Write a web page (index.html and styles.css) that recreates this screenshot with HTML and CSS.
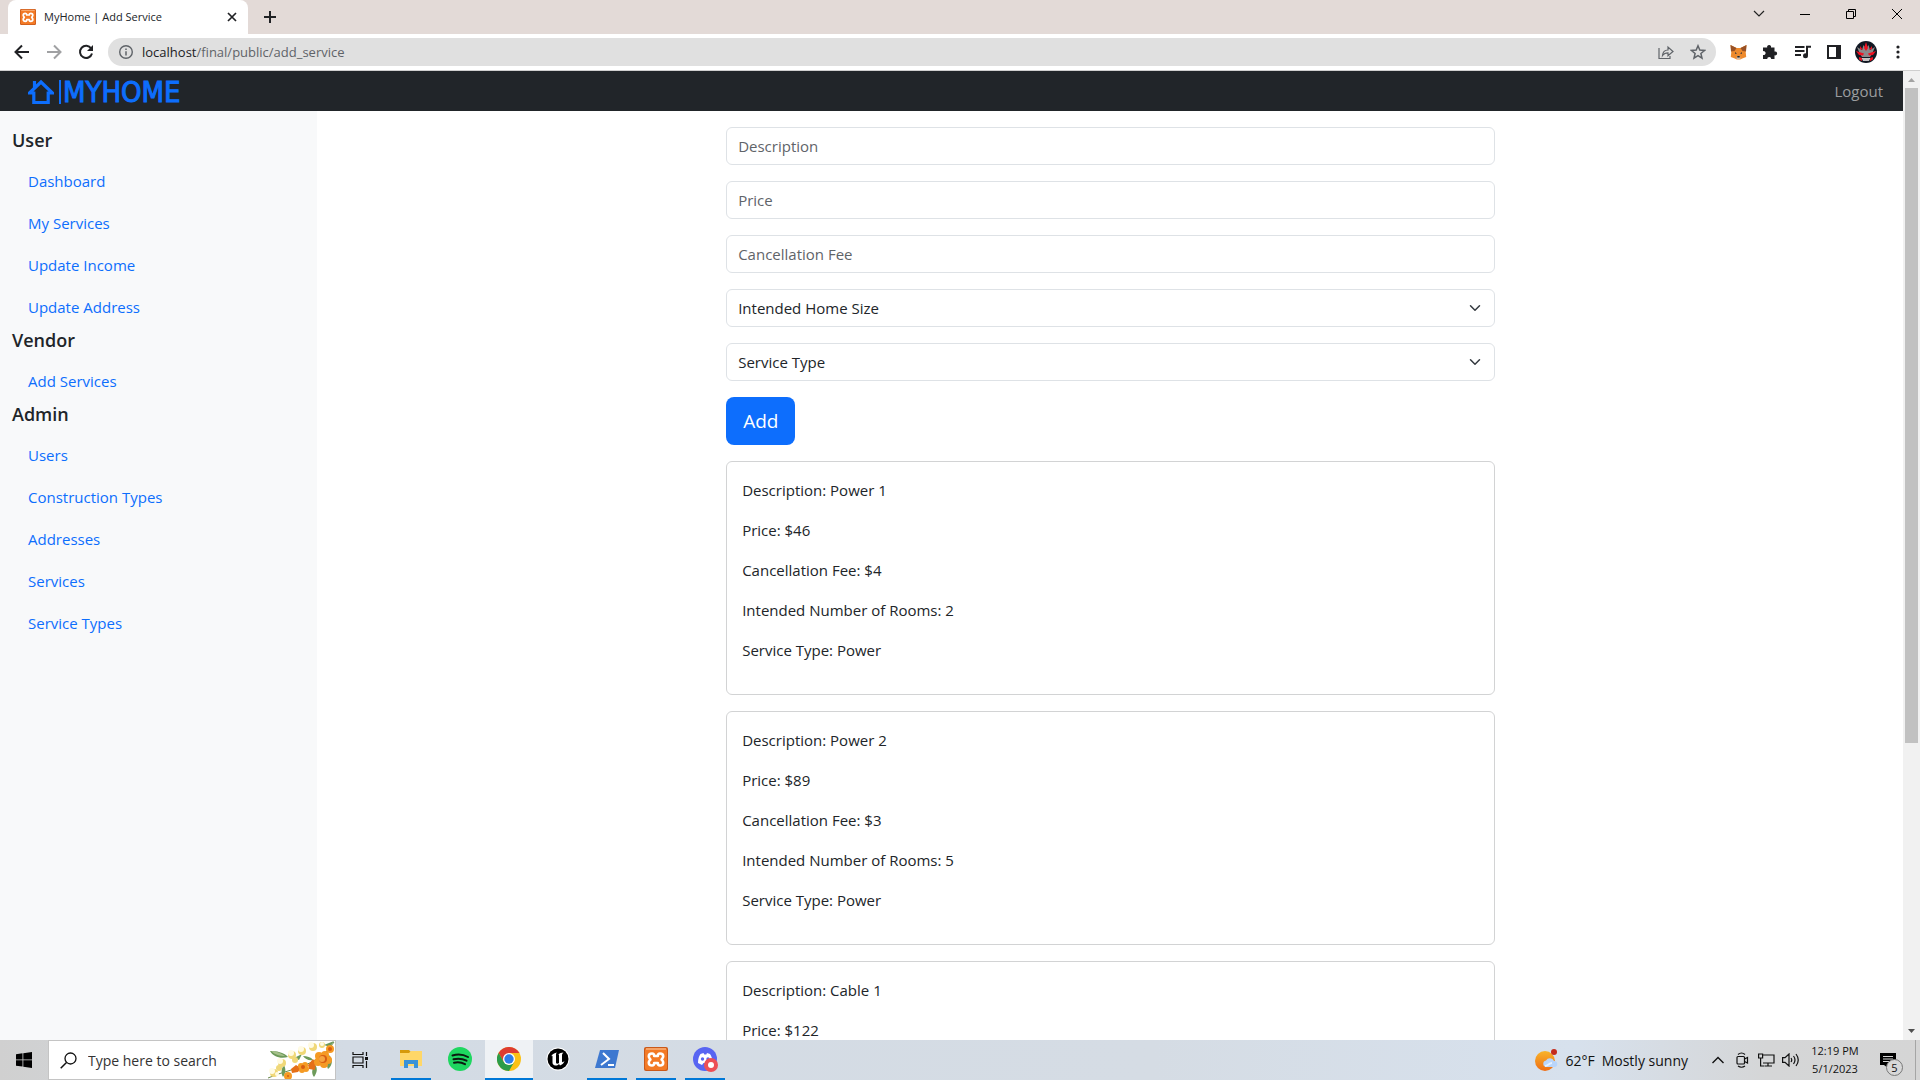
FILE: index.html
```html
<!DOCTYPE html>
<html lang="en">
<head>
  <meta charset="UTF-8">
  <meta name="viewport" content="width=device-width, initial-scale=1.0">
  <title>MyHome | Add Service</title>
  <link rel="stylesheet" href="styles.css">
</head>
<body>

  <!-- shared icon -->
  <svg class="defs" width="0" height="0" aria-hidden="true">
    <symbol id="xampp" viewBox="0 0 24 24">
      <rect width="24" height="24" rx="2" fill="#c9591a"/>
      <rect x="1" y="1" width="22" height="22" rx="2" fill="#f37a26"/>
      <path d="M2 2h20" stroke="#f9b27c" stroke-width="1.500"/>
      <path d="M8 6.500c1.500 0 2.200 1 2.200 2.500h3.600c0-1.500.7-2.500 2.200-2.500 2 0 3.200 1.200 3.200 2.800s-1 2.200-1.600 3.200c.6 1 1.600 1.600 1.600 3.200s-1.200 2.800-3.200 2.800c-1.500 0-2.200-1-2.200-2.500h-3.600c0 1.500-.7 2.500-2.200 2.500-2 0-3.200-1.200-3.200-2.800s1-2.200 1.600-3.200c-.6-1-1.600-1.600-1.600-3.200S6 6.500 8 6.500z" fill="#f37a26" stroke="#fff" stroke-width="2.600" stroke-linejoin="round"/>
    </symbol>
  </svg>

  <header class="browser">
    <div class="tab-strip">
      <div class="tab">
        <svg width="16" height="16"><use href="#xampp"/></svg>
        <span class="tab-title">MyHome | Add Service</span>
        <button class="tab-close" aria-label="Close tab">
          <svg width="10" height="10" viewBox="0 0 10 10"><path d="M1 1l8 8M9 1L1 9" stroke="#202124" stroke-width="1.700"/></svg>
        </button>
      </div>
      <button class="new-tab" aria-label="New tab">
        <svg width="12" height="12" viewBox="0 0 12 12"><path d="M6 0v12M0 6h12" stroke="#202124" stroke-width="2"/></svg>
      </button>
      <div class="window-controls">
        <button aria-label="Search tabs"><svg width="12" height="8" viewBox="0 0 12 8"><path d="M1 1l5 5 5-5" fill="none" stroke="#222" stroke-width="1.200"/></svg></button>
        <button aria-label="Minimize"><svg width="10" height="10" viewBox="0 0 10 10"><path d="M0 5.500h10" stroke="#000"/></svg></button>
        <button aria-label="Restore"><svg width="10" height="10" viewBox="0 0 10 10"><path d="M.5 2.500h7v7h-7zM2.500 2.500v-2h7v7h-2" fill="none" stroke="#000"/></svg></button>
        <button aria-label="Close"><svg width="10" height="10" viewBox="0 0 10 10"><path d="M0 0l10 10M10 0L0 10" stroke="#000"/></svg></button>
      </div>
    </div>

    <div class="toolbar">
      <button aria-label="Back"><svg width="16" height="16" viewBox="0 0 16 16"><path d="M15 8H2M8 1.500L1.500 8 8 14.500" fill="none" stroke="#202124" stroke-width="2"/></svg></button>
      <button aria-label="Forward"><svg width="16" height="16" viewBox="0 0 16 16"><path d="M1 8h13M8 1.500L14.500 8 8 14.500" fill="none" stroke="#a0a1a3" stroke-width="2"/></svg></button>
      <button aria-label="Reload"><svg width="16" height="16" viewBox="0 0 16 16"><path d="M13.200 4.500A6.100 6.100 0 1 0 14 9.500" fill="none" stroke="#202124" stroke-width="2"/><path d="M15 1v6H9z" fill="#202124"/></svg></button>
      <div class="omnibox">
        <svg width="14" height="14" viewBox="0 0 14 14"><circle cx="7" cy="7" r="6.300" fill="none" stroke="#5f6368" stroke-width="1.400"/><path d="M7 6.200V10.500M7 3.400v1.500" stroke="#5f6368" stroke-width="1.500"/></svg>
        <span class="url">localhost<span class="path">/final/public/add_service</span></span>
        <button aria-label="Share"><svg width="16" height="16" viewBox="0 0 16 16"><path d="M1 4v10.500h11V12M4.500 11.500c.3-3.300 2-5.500 5.500-5.500V3l5 4.500-5 4.200V8.800c-2.500 0-4.200.9-5.500 2.700z" fill="none" stroke="#5f6368" stroke-width="1.200"/></svg></button>
        <button aria-label="Bookmark"><svg width="16" height="16" viewBox="0 0 16 16"><path d="M8 1.800l1.800 4.300 4.700.4-3.600 3 1.100 4.600L8 11.700l-4 2.400 1.100-4.600-3.600-3 4.700-.4z" fill="none" stroke="#5f6368" stroke-width="1.500"/></svg></button>
      </div>
      <button aria-label="MetaMask">
        <svg width="17" height="16" viewBox="0 0 17 16">
          <path d="M.5 1l6 3h4l6-3-.8 7 .5 5-4 1.500-2 1h-3.400l-2-1L.8 13l.5-5z" fill="#ee8a2c"/>
          <path d="M.5 1l6 3-2 3-3.500.500zM16.500 1l-6 3 2 3 3.500.500z" fill="#975126"/>
          <path d="M5 8l2 1.500L5 10zM12 8l-2 1.500 2 .5z" fill="#4a4038"/>
          <path d="M7 12h3l.5 3h-4z" fill="#d0b9a8"/><path d="M7.300 12h2.400v1.500H7.300z" fill="#202020"/>
        </svg>
      </button>
      <button aria-label="Extensions"><svg width="16" height="16" viewBox="0 0 16 16"><path d="M1 3.500h4.200a2 2 0 1 1 3.800 0h3.500v4a2 2 0 1 1 0 3.800V15H9.200a2 2 0 1 0-4 0H1v-4a2 2 0 1 0 0-3.800z" fill="#202124"/></svg></button>
      <button aria-label="Media"><svg width="17" height="14" viewBox="0 0 17 14"><path d="M1 2h9.500M1 6h9.500M1 10h6" stroke="#202124" stroke-width="1.800"/><path d="M13 10.500V1.800h4" fill="none" stroke="#202124" stroke-width="2"/><circle cx="11.500" cy="10.800" r="2.500" fill="#202124"/></svg></button>
      <button aria-label="Side panel"><svg width="14" height="14" viewBox="0 0 14 14"><path d="M1 1h12v12H1z" fill="none" stroke="#202124" stroke-width="2"/><path d="M9 0h5v14H9z" fill="#202124"/></svg></button>
      <button aria-label="Profile">
        <svg width="22" height="22" viewBox="0 0 22 22">
          <circle cx="11" cy="11" r="11" fill="#101722"/>
          <path d="M2 6l5 3 1.500-5L11 8l2.500-4L15 9l5-3-3 7-2 3H7l-2-3z" fill="#8b8889"/>
          <path d="M11 1l2 6-2 3-2-3zM1 10l8 2.500-1 2-4-.5zM21 10l-8 2.500 1 2 4-.5zM4 16l3 1v3l-3-1.500zM18 16l-3 1v3l3-1.500zM5 5l3 4-3-1zM17 5l-3 4 3-1z" fill="#ee1020"/>
          <path d="M7 17h8l-1 3H8z" fill="#f3eeee"/><path d="M9 17v3M11 17v3M13 17v3" stroke="#333" stroke-width=".5"/>
        </svg>
      </button>
      <button aria-label="Menu"><svg width="4" height="14" viewBox="0 0 4 14" fill="#202124"><circle cx="2" cy="2" r="1.600"/><circle cx="2" cy="7" r="1.600"/><circle cx="2" cy="12" r="1.600"/></svg></button>
    </div>
  </header>

  <div class="viewport">
    <div class="page">
      <nav class="navbar">
        <a class="brand" href="#">
          <svg width="26" height="26" viewBox="0 0 26 26"><path d="M1.500 14L13 3l11.500 11h-4.300v9.500H5.800V14zM6.500 9V2" fill="none" stroke="#0d6efd" stroke-width="3.200"/></svg>
          <span class="brand-bar"></span>
          <span>MYHOME</span>
        </a>
        <a class="logout" href="#">Logout</a>
      </nav>

      <div class="row">
        <aside class="sidebar">
          <h5>User</h5>
          <a href="#">Dashboard</a>
          <a href="#">My Services</a>
          <a href="#">Update Income</a>
          <a href="#">Update Address</a>
          <h5>Vendor</h5>
          <a href="#">Add Services</a>
          <h5>Admin</h5>
          <a href="#">Users</a>
          <a href="#">Construction Types</a>
          <a href="#">Addresses</a>
          <a href="#">Services</a>
          <a href="#">Service Types</a>
        </aside>

        <main class="content">
          <form class="service-form">
            <input class="form-control" type="text" aria-label="Description" placeholder="Description">
            <input class="form-control" type="text" aria-label="Price" placeholder="Price">
            <input class="form-control" type="text" aria-label="Cancellation Fee" placeholder="Cancellation Fee">
            <div class="select-wrap">
              <select class="form-control" aria-label="Intended Home Size"><option>Intended Home Size</option></select>
              <svg class="caret" width="12" height="12" viewBox="0 0 16 16"><path d="M2 5l6 6 6-6" fill="none" stroke="#343a40" stroke-width="2" stroke-linecap="round" stroke-linejoin="round"/></svg>
            </div>
            <div class="select-wrap">
              <select class="form-control" aria-label="Service Type"><option>Service Type</option></select>
              <svg class="caret" width="12" height="12" viewBox="0 0 16 16"><path d="M2 5l6 6 6-6" fill="none" stroke="#343a40" stroke-width="2" stroke-linecap="round" stroke-linejoin="round"/></svg>
            </div>
            <button class="btn-primary" type="submit">Add</button>
          </form>

          <div class="card">
            <p>Description: Power 1</p>
            <p>Price: $46</p>
            <p>Cancellation Fee: $4</p>
            <p>Intended Number of Rooms: 2</p>
            <p>Service Type: Power</p>
          </div>
          <div class="card">
            <p>Description: Power 2</p>
            <p>Price: $89</p>
            <p>Cancellation Fee: $3</p>
            <p>Intended Number of Rooms: 5</p>
            <p>Service Type: Power</p>
          </div>
          <div class="card">
            <p>Description: Cable 1</p>
            <p>Price: $122</p>
          </div>
        </main>
      </div>
    </div>

    <div class="scrollbar">
      <svg width="17" height="17" viewBox="0 0 17 17"><path d="M5 11l3.500-4 3.500 4z" fill="#a3a3a3"/></svg>
      <div class="track"><div class="thumb"></div></div>
      <svg width="17" height="17" viewBox="0 0 17 17"><path d="M5 6l3.500 4L12 6z" fill="#505050"/></svg>
    </div>
  </div>

  <footer class="taskbar">
    <button class="start" aria-label="Start">
      <svg width="16" height="16" viewBox="0 0 16 16"><path d="M0 2.200L6.500 1.300v6.200H0zM7.300 1.200L16 0v7.500H7.300zM0 8.300h6.500v6.300L0 13.700zM7.300 8.300H16V16l-8.700-1.200z"/></svg>
    </button>
    <div class="search">
      <svg width="17" height="17" viewBox="0 0 17 17"><circle cx="10.500" cy="6.500" r="5.500" fill="none" stroke="#111" stroke-width="1.300"/><path d="M6.500 10.500L.7 16.300" stroke="#111" stroke-width="1.500"/></svg>
      <input type="text" aria-label="Search" placeholder="Type here to search">
      <svg class="flowers" width="68" height="38" viewBox="0 0 68 38">
        <path d="M1 37C14 31 32 28 45 21S62 8 67 1" fill="none" stroke="#6a8a4b" stroke-width="1"/>
        <path d="M3 10c6 0 14 1 18 6-7 2-15 0-18-6zM36 15c4 0 8 1 10 4-4 1-8-1-10-4zM62 14c4 4 4 10-1 14-2-5-1-10 1-14zM17 24c2 4 2 8-1 12-2-4-2-8 1-12zM27 17l8-4-3 6zM48 24c3 3 2 8-1 12-3-4-2-8 1-12zM57 4l10-4-4 6z" fill="#6d9a5a"/>
        <path d="M4 10c5 0 10 2 14 5-5 0-10-1-14-5z" fill="#a5c08a"/>
        <g fill="#f0d878"><circle cx="25" cy="14" r="4"/><circle cx="35" cy="10" r="4"/><circle cx="46" cy="6" r="4"/><circle cx="55" cy="4" r="3"/><circle cx="15" cy="22" r="4"/><circle cx="7" cy="32" r="4"/><circle cx="28" cy="19" r="3"/><circle cx="12" cy="27" r="3"/></g>
        <g fill="#fffbe4"><circle cx="24" cy="12" r="3"/><circle cx="34" cy="8" r="3"/><circle cx="44" cy="4" r="3"/><circle cx="13" cy="20" r="3"/><circle cx="5" cy="30" r="3"/><circle cx="10" cy="33" r="2"/><circle cx="55" cy="3" r="2"/></g>
        <path d="M41 24l5-6 3 4-1 7-6-1z" fill="#e56f18"/>
        <path d="M24 28l5-4 5 3-3 4-6 1z" fill="#e56f18"/>
        <g fill="#f59a24"><circle cx="52" cy="15" r="4"/><circle cx="58" cy="14" r="4"/><circle cx="61" cy="19" r="4"/><circle cx="51" cy="21" r="4"/><circle cx="57" cy="23" r="4"/><circle cx="34" cy="25" r="3"/><circle cx="38" cy="24" r="3"/><circle cx="39" cy="28" r="3"/><circle cx="35" cy="29" r="3"/><circle cx="63" cy="8" r="4"/><circle cx="21" cy="35" r="4"/></g>
        <g fill="#d75d12"><circle cx="56" cy="18" r="4"/><circle cx="36" cy="26" r="2"/><circle cx="63" cy="8" r="2"/><circle cx="21" cy="35" r="1"/></g>
        <circle cx="55" cy="18" r="3" fill="#f6a440"/>
      </svg>
    </div>
    <button class="task-view" aria-label="Task view">
      <svg width="17" height="16" viewBox="0 0 17 16" fill="none" stroke="#111" stroke-width="1.200"><path d="M1 0v2.500h10V0M1 5h10v6H1zM1 16v-2.500h10V16M14.500 0v4M14.500 9v7"/><path d="M13 5h3v3h-3z" fill="#111" stroke="none"/></svg>
    </button>
    <div class="apps">
      <button class="app open" aria-label="File Explorer">
        <svg width="22" height="18" viewBox="0 0 22 18"><path d="M0 0h9l2 2v5H0z" fill="#d69a0b"/><path d="M0 3h9l2-2h11v15H0z" fill="#ffd768"/><path d="M4 18v-8h14v8h-4v-4H8v4z" fill="#3a92d8"/></svg>
      </button>
      <button class="app" aria-label="Spotify">
        <svg width="24" height="24" viewBox="0 0 24 24"><circle cx="12" cy="12" r="12" fill="#1ed760"/><path d="M4.500 8.500c5-1.500 11-1 15.500 1.500M5.500 12.300c4.500-1.200 9-.7 13 1.400M6 15.800c4-.9 7.500-.5 11 1.400" fill="none" stroke="#0b1a10" stroke-width="2" stroke-linecap="round"/></svg>
      </button>
      <button class="app open active" aria-label="Chrome">
        <svg width="24" height="24" viewBox="0 0 24 24"><circle cx="12" cy="12" r="12" fill="#fbc116"/><path d="M12 6h10.400A12 12 0 0 0 1.600 6l5.200 9z" fill="#de3c31"/><path d="M1.600 6A12 12 0 0 0 12 24l5.200-9-5.200 3-5.200-3z" fill="#2b9c4a"/><circle cx="12" cy="12" r="6" fill="#fff"/><circle cx="12" cy="12" r="4.700" fill="#2f7de9"/></svg>
      </button>
      <button class="app" aria-label="Unreal Engine">
        <svg width="24" height="24" viewBox="0 0 24 24"><circle cx="12" cy="12" r="11.500" fill="#fff"/><circle cx="12" cy="12" r="10.500"/><path d="M5 9.500C6.500 7 8.500 5.800 11 5.500c-1 .8-1 1.500-1 2.500v7.500c0 1.500 2 1.500 3 .5V8.500c0-1-.5-1-1-.800 1.500-1.500 3.500-2 5.500-2.200-1.200 1-1.500 1.800-1.500 3v6c.3 1 1.200.8 2.500-.5-1 2.500-2.500 3.800-4.500 4.500l-1-1.500c-1 1-2 1.500-3.500 1.500-2-.2-3-1.200-3-3V9.500c0-1-.5-1-1.500 0z" fill="#fff"/></svg>
      </button>
      <button class="app open" aria-label="PowerShell">
        <svg width="24" height="18" viewBox="0 0 24 18"><path d="M5 0h19l-4 18H0z" fill="#3d78d0"/><path d="M8 3l6 6-8 6M13 15h6" fill="none" stroke="#fff" stroke-width="2"/></svg>
      </button>
      <button class="app open" aria-label="XAMPP">
        <svg width="24" height="24"><use href="#xampp"/></svg>
      </button>
      <button class="app open" aria-label="Discord">
        <svg width="25" height="25" viewBox="0 0 25 25"><circle cx="12" cy="12" r="12" fill="#5865f2"/><path d="M5 16c0-4 1-7 2.500-9l3-1 .8 1.500h2L14 6l3 1c1.500 2 2.500 5 2.500 9l-3.500 2-1.500-2h-4L9 18z" fill="#fff"/><circle cx="9.500" cy="12" r="1.700" fill="#5865f2"/><circle cx="15" cy="12" r="1.700" fill="#5865f2"/><circle cx="18" cy="18" r="7" fill="#ed4f55"/><circle cx="18" cy="18" r="3" fill="#fff"/></svg>
      </button>
    </div>

    <div class="tray">
      <button class="weather">
        <svg width="23" height="22" viewBox="0 0 23 22"><defs><linearGradient id="sun" x2="0" y2="1"><stop stop-color="#f8b42b"/><stop offset="1" stop-color="#ef6c13"/></linearGradient></defs><circle cx="10" cy="12" r="10" fill="url(#sun)"/><circle cx="19" cy="3" r="3" fill="#c42b1c"/><path d="M11 18a3.300 3.300 0 0 1 0-6.500 4.500 4.500 0 0 1 8 .5 3 3 0 0 1 .5 6z" fill="#b9d5fa"/><path d="M10 17c3 0 4-3 7-3" fill="none" stroke="#e6f1ff" stroke-width="2"/></svg>
        <span>62°F</span>
        <span>Mostly sunny</span>
      </button>
      <button class="tray-icon" aria-label="Show hidden icons"><svg width="12" height="8" viewBox="0 0 12 8"><path d="M.5 7L6 1.500 11.500 7" fill="none" stroke="#111" stroke-width="1.400"/></svg></button>
      <button class="tray-icon" aria-label="Meet now"><svg width="13" height="16" viewBox="0 0 13 16" fill="none" stroke="#111" stroke-width="1.200"><rect x="1" y="4.500" width="7.500" height="7.500" rx="1"/><path d="M8.500 7l3-1.500v5.500l-3-1.500M2 2.500Q5.500-.5 9 2.500M2 14q3.500 2.500 7 0"/></svg></button>
      <button class="tray-icon" aria-label="Network"><svg width="17" height="14" viewBox="0 0 17 14" fill="none" stroke="#111" stroke-width="1.200"><path d="M5 2h11v8H5M10 10v3M7 13h7M.6 1h4v4h-4zM2.600 5v8h4"/></svg></button>
      <button class="tray-icon" aria-label="Volume"><svg width="17" height="14" viewBox="0 0 17 14" fill="none" stroke="#111" stroke-width="1.200"><path d="M.6 4.700H3L7 1v12L3 9.300H.6zM9 5q1.500 2 0 4M11.500 3q3 4 0 8M14 1q4.500 6 0 12"/></svg></button>
      <div class="clock"><span>12:19 PM</span><span>5/1/2023</span></div>
      <button class="notifications" aria-label="Notifications">
        <svg width="16" height="15" viewBox="0 0 16 15"><path d="M0 0h16v12H8v3l-4-3H0z"/><path d="M3 3.500h10M3 6h10M3 8.500h7" stroke="#d5d5d5"/></svg>
        <span class="badge">5</span>
      </button>
    </div>
  </footer>

</body>
</html>
```
FILE: styles.css
```css
* {
  box-sizing: border-box;
}

body {
  margin: 0;
  height: 100vh;
  display: flex;
  flex-direction: column;
  overflow: hidden;
  font-family: "Segoe UI", "Open Sans", "Noto Sans", sans-serif;
  font-size: 15px;
  line-height: 24px;
  color: #212529;
  background-color: #fff;
}

button {
  display: flex;
  align-items: center;
  justify-content: center;
  padding: 0;
  border: none;
  background: none;
  font-family: inherit;
  color: inherit;
}

a {
  text-decoration: none;
}

svg {
  flex-shrink: 0;
}

.defs {
  position: absolute;
}

/* Browser window */
.tab-strip {
  display: flex;
  height: 34px;
  padding-left: 8px;
  background-color: #e3dad7;
}

.tab {
  display: flex;
  align-items: center;
  width: 240px;
  padding: 0 11px 0 12px;
  background-color: #fff;
  border-radius: 8px 8px 0 0;
}

.tab-title {
  flex: 1;
  margin-left: 8px;
  font-size: 11px;
}

.tab-close {
  width: 10px;
}

.new-tab {
  width: 28px;
  margin-left: 8px;
}

.window-controls {
  display: flex;
  margin-left: auto;
}

.window-controls button {
  width: 46px;
  height: 28px;
}

.toolbar {
  display: flex;
  align-items: center;
  height: 37px;
  padding: 0 6px;
  border-bottom: 1px solid #cfcfcf;
}

.toolbar button {
  width: 32px;
  height: 28px;
}

.omnibox {
  flex: 1;
  display: flex;
  align-items: center;
  height: 28px;
  margin: 0 6px;
  padding: 0 2px 0 11px;
  border-radius: 14px;
  background-color: #e0e0e0;
}

.url {
  flex: 1;
  margin-left: 9px;
  font-size: 13px;
  color: #202124;
}

.path {
  color: #5f6368;
}

/* Page */
.viewport {
  flex: 1;
  display: flex;
  min-height: 0;
}

.page {
  flex: 1;
  display: flex;
  flex-direction: column;
  overflow: hidden;
}

.navbar {
  display: flex;
  align-items: center;
  justify-content: space-between;
  flex-shrink: 0;
  height: 40px;
  padding: 0 20px 0 28px;
  background-color: #212529;
}

.brand {
  display: flex;
  align-items: center;
  color: #0d6efd;
  font-family: "DejaVu Sans Condensed", "DejaVu Sans", sans-serif;
  font-size: 29px;
  font-stretch: condensed;
  line-height: 28px;
  padding-top: 2px;
  -webkit-text-stroke: 1px #0d6efd;
}

.brand-bar {
  width: 2px;
  height: 24px;
  margin: 0 2px 0 5px;
  background-color: #0d6efd;
}

.logout {
  color: #9b9d9f;
}

.row {
  flex: 1;
  display: flex;
  min-height: 0;
}

.sidebar {
  width: calc(100% / 6);
  padding: 17px 12px;
  background-color: #f8f9fa;
}

.sidebar h5 {
  margin: 0 0 8px;
  font-size: 18px;
  font-weight: 600;
  line-height: 24px;
}

.sidebar a {
  display: block;
  padding: 9px 16px;
  color: #0d6efd;
}

.content {
  flex: 1;
  padding: 16px 408px 16px 409px;
}

.service-form {
  display: flex;
  flex-direction: column;
  gap: 16px;
  margin-bottom: 16px;
}

.form-control {
  display: block;
  width: 100%;
  height: 38px;
  padding: 6px 11px;
  border: 1px solid #dee2e6;
  border-radius: 6px;
  background-color: #fff;
  color: #212529;
  font-family: inherit;
  font-size: 15px;
  line-height: 24px;
  appearance: none;
}

.form-control::placeholder {
  color: #5f6469;
  opacity: 1;
}

.select-wrap {
  position: relative;
}

.caret {
  position: absolute;
  top: 13px;
  right: 14px;
  pointer-events: none;
}

.btn-primary {
  align-self: flex-start;
  height: 48px;
  padding: 0 17px;
  border-radius: 8px;
  background-color: #0d6efd;
  color: #fff;
  font-size: 19px;
}

.card {
  margin-bottom: 16px;
  padding: 16px 15px;
  border: 1px solid #d2d3d4;
  border-radius: 6px;
}

.card p {
  margin: 0 0 16px;
}

.scrollbar {
  display: flex;
  flex-direction: column;
  width: 17px;
  background-color: #f1f1f1;
}

.track {
  flex: 1;
  padding: 0 2px;
}

.thumb {
  height: 70%;
  background-color: #c1c1c1;
}

/* Taskbar */
.taskbar {
  display: flex;
  flex-shrink: 0;
  height: 40px;
  background: linear-gradient(to right, #d0d0d0, #d3dbe4 18%, #d5dce4 60%, #d7e1ed 82%, #d5d6d7 92%, #d5d5d5);
  color: #111;
}

.start {
  width: 48px;
}

.search {
  display: flex;
  align-items: center;
  width: 288px;
  padding-left: 11px;
  border: 1px solid #c4c4c4;
  background-color: #fff;
}

.search input {
  flex: 1;
  min-width: 0;
  margin-left: 11px;
  padding: 0;
  border: none;
  font-family: inherit;
  font-size: 14px;
}

.search input::placeholder {
  color: #333;
  opacity: 1;
}

.task-view {
  width: 48px;
}

.apps {
  display: flex;
  gap: 1px;
  margin-left: 3px;
}

.app {
  width: 48px;
  border-bottom: 2px solid transparent;
}

.app.open {
  background: linear-gradient(#0078d7, #0078d7) center bottom / 40px 2px no-repeat;
  background-origin: border-box;
  background-clip: border-box;
}

.app.active {
  border-bottom-color: #0078d7;
  background: #eff2f5;
}

.tray {
  display: flex;
  align-items: center;
  margin-left: auto;
  padding-right: 4px;
}

.weather {
  margin-right: 18px;
  font-size: 14px;
}

.weather span {
  margin-left: 7px;
}

.tray-icon {
  width: 24px;
  height: 40px;
}

.clock {
  display: flex;
  flex-direction: column;
  align-items: center;
  width: 66px;
  font-size: 11px;
  line-height: 18px;
}

.notifications {
  position: relative;
  width: 48px;
  height: 40px;
  padding-right: 8px;
  border-right: 1px solid #a5a5a5;
}

.badge {
  position: absolute;
  right: 12px;
  bottom: 4px;
  width: 17px;
  height: 17px;
  border: 1px solid #777;
  border-radius: 50%;
  background-color: #d8d8d8;
  font-size: 11px;
  line-height: 15px;
  text-align: center;
}
```
